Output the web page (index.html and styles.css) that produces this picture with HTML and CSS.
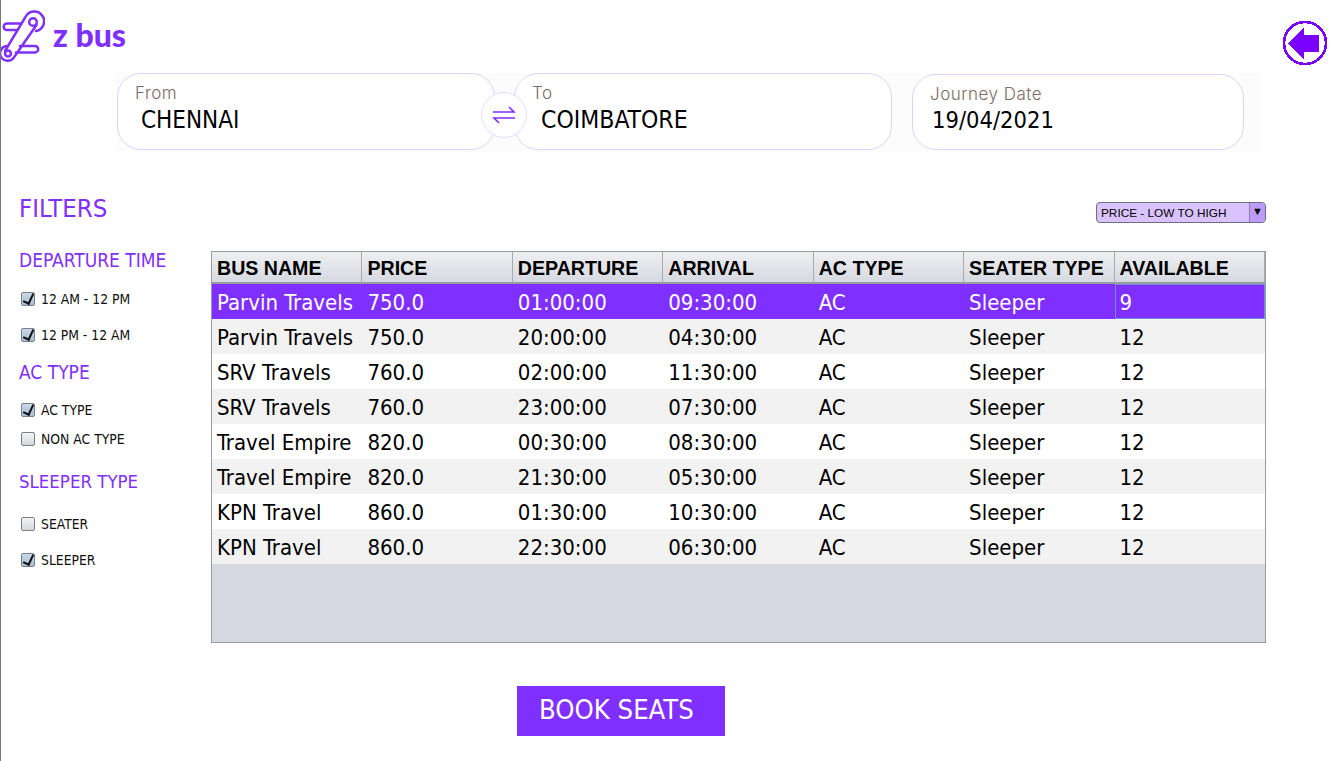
FILE: index.html
```html
<!DOCTYPE html>
<html lang="en">
<head>
  <meta charset="UTF-8" />
  <title>z bus</title>
  <link rel="stylesheet" href="styles.css">
</head>
<body>

<header class="topbar">
  <div class="logo">
    <svg class="logo-mark" width="44" height="64" viewBox="1 0 44 64" fill="none">
      <g stroke="#7f2fff" stroke-width="2.500" stroke-linecap="round">
        <path d="M21.500 23.500 H7 a3.300 3.300 0 0 0 0 6.600 H17.500"/>
        <path d="M20 46 H35 a3.200 3.200 0 0 1 0 6.400 H16"/>
        <path d="M5 51 L25.500 17 A9.800 9.800 0 1 1 36 31"/>
        <path d="M36.500 25 L13.500 58 A7.500 7.500 0 1 1 6 46"/>
        <circle cx="33" cy="22" r="3.800"/>
        <circle cx="8" cy="53.500" r="3"/>
      </g>
    </svg>
    <span class="logo-text">z bus</span>
  </div>
  <svg class="back" width="48" height="48" viewBox="0 0 48 48" shape-rendering="crispEdges">
    <circle cx="24" cy="24" r="21" fill="none" stroke="#7a00ff" stroke-width="2.600"/>
    <path d="M7 24 L23 8 V16 H38 V33 H23 V41 Z" fill="#7a00ff"/>
  </svg>
</header>

<section class="search">
  <div class="field field-from">
    <label>From</label>
    <div class="value">CHENNAI</div>
  </div>
  <div class="field field-to">
    <label>To</label>
    <div class="value value-to">COIMBATORE</div>
  </div>
  <div class="field field-date">
    <label>Journey Date</label>
    <div class="value value-date">19/04/2021</div>
  </div>
  <div class="swap">
    <svg width="24" height="18" viewBox="0 0 24 18" fill="none" stroke="#7f2fff" stroke-width="1.600">
      <path d="M1 6 H22 L17 1"/>
      <path d="M23 12 H2 L7 17"/>
    </svg>
  </div>
</section>

<div class="main">
  <aside class="filters">
    <h2>FILTERS</h2>

    <h3 class="h-departure">DEPARTURE TIME</h3>
    <div class="check check-a on"><span class="box"></span>12 AM - 12 PM</div>
    <div class="check check-b on"><span class="box"></span>12 PM - 12 AM</div>

    <h3 class="h-ac">AC TYPE</h3>
    <div class="check check-c on"><span class="box"></span>AC TYPE</div>
    <div class="check check-d"><span class="box"></span>NON AC TYPE</div>

    <h3 class="h-sleeper">SLEEPER TYPE</h3>
    <div class="check check-e"><span class="box"></span>SEATER</div>
    <div class="check check-b on"><span class="box"></span>SLEEPER</div>
  </aside>

  <div class="results">
    <div class="sortrow">
      <div class="sort">
        <span class="sort-text">PRICE - LOW TO HIGH</span>
        <span class="sort-arrow">▼</span>
      </div>
    </div>

    <div class="tablewrap">
      <table>
        <thead>
          <tr>
            <th>BUS NAME</th><th>PRICE</th><th>DEPARTURE</th><th>ARRIVAL</th><th>AC TYPE</th><th>SEATER TYPE</th><th>AVAILABLE</th>
          </tr>
        </thead>
        <tbody>
          <tr class="selected"><td>Parvin Travels</td><td>750.0</td><td>01:00:00</td><td>09:30:00</td><td>AC</td><td>Sleeper</td><td class="focus">9</td></tr>
          <tr><td>Parvin Travels</td><td>750.0</td><td>20:00:00</td><td>04:30:00</td><td>AC</td><td>Sleeper</td><td>12</td></tr>
          <tr><td>SRV Travels</td><td>760.0</td><td>02:00:00</td><td>11:30:00</td><td>AC</td><td>Sleeper</td><td>12</td></tr>
          <tr><td>SRV Travels</td><td>760.0</td><td>23:00:00</td><td>07:30:00</td><td>AC</td><td>Sleeper</td><td>12</td></tr>
          <tr><td>Travel Empire</td><td>820.0</td><td>00:30:00</td><td>08:30:00</td><td>AC</td><td>Sleeper</td><td>12</td></tr>
          <tr><td>Travel Empire</td><td>820.0</td><td>21:30:00</td><td>05:30:00</td><td>AC</td><td>Sleeper</td><td>12</td></tr>
          <tr><td>KPN Travel</td><td>860.0</td><td>01:30:00</td><td>10:30:00</td><td>AC</td><td>Sleeper</td><td>12</td></tr>
          <tr><td>KPN Travel</td><td>860.0</td><td>22:30:00</td><td>06:30:00</td><td>AC</td><td>Sleeper</td><td>12</td></tr>
        </tbody>
      </table>
    </div>

    <button class="book">BOOK SEATS</button>
  </div>
</div>

</body>
</html>
```

FILE: styles.css
```css
* {
  box-sizing: border-box;
}

html, body {
  height: 100%;
}

body {
  margin: 0;
  background: white;
  border-left: 1px solid #777;
  font-family: "DejaVu Sans Condensed", "DejaVu Sans", sans-serif;
  color: black;
  overflow: hidden;
}

.topbar {
  height: 73px;
  display: flex;
  justify-content: space-between;
  align-items: flex-start;
  padding-right: 12px;
}

.logo {
  display: flex;
  align-items: flex-start;
}

.logo-text {
  margin-left: 8px;
  margin-top: 17px;
  font-family: Lato, sans-serif;
  font-weight: 900;
  font-size: 32px;
  line-height: 36px;
  color: #7f2fff;
}

.back {
  margin-top: 19px;
}

.search {
  position: relative;
  display: flex;
  width: 1144px;
  height: 80px;
  margin-left: 116px;
  background: #fcfcfc;
}

.field {
  height: 77px;
  background: white;
  border: 1px solid #e0d2ff;
  border-radius: 24px;
  padding: 9px 17px;
}

.field label {
  display: block;
  font-family: Inter, sans-serif;
  font-weight: 300;
  font-size: 17px;
  letter-spacing: 0.5px;
  line-height: 20px;
  color: #7a6c66;
}

.value {
  font-size: 24px;
  line-height: 30px;
  margin-left: 6px;
  margin-top: 2px;
}

.value-to {
  margin-left: 9px;
  font-size: 24.500px;
}

.value-date {
  margin-left: 2px;
  margin-top: 1px;
  font-size: 23.500px;
}

.field-from {
  width: 378px;
}

.field-to {
  width: 378px;
  margin-left: 19px;
}

.field-date {
  width: 332px;
  margin-left: 20px;
  margin-top: 1px;
  height: 76px;
}

.swap {
  position: absolute;
  left: 364px;
  top: 19px;
  width: 46px;
  height: 46px;
  border-radius: 50%;
  background: white;
  border: 1px solid #e6dbff;
  display: flex;
  align-items: center;
  justify-content: center;
}

.main {
  display: flex;
}

.filters {
  width: 210px;
  padding-left: 18px;
}

.filters h2 {
  margin: 40px 0 0;
  font-weight: normal;
  font-size: 25.500px;
  line-height: 30px;
  color: #7f2fff;
}

.filters h3 {
  margin: 0;
  font-weight: normal;
  font-size: 19px;
  line-height: 22px;
  color: #7f2fff;
}

.h-departure {
  padding-top: 26px;
}

.h-ac {
  padding-top: 17px;
}

.h-sleeper {
  padding-top: 23px;
  font-size: 18.500px !important;
}

.check {
  display: flex;
  align-items: center;
  height: 18px;
  font-size: 13.800px;
  color: #111;
}

.check-a {
  margin-top: 19px;
}

.check-b {
  margin-top: 18px;
}

.check-c {
  margin-top: 18px;
}

.check-d {
  margin-top: 11px;
}

.check-e {
  margin-top: 22px;
}

.box {
  position: relative;
  width: 14px;
  height: 14px;
  margin-left: 2px;
  margin-right: 6px;
  border: 1px solid #7a7f88;
  border-radius: 2px;
  background: linear-gradient(#f4f4f6, #d5d7db);
}

.on .box {
  background: linear-gradient(#c9d8e8, #a9bfd6);
}

.on .box::after {
  content: "";
  position: absolute;
  left: 3px;
  top: -1px;
  width: 5px;
  height: 10px;
  border-right: 2px solid #111;
  border-bottom: 2px solid #111;
  transform: rotate(25deg);
}

.results {
  width: 1055px;
}

.sortrow {
  display: flex;
  justify-content: flex-end;
  padding-top: 49px;
  height: 98px;
}

.sort {
  width: 170px;
  height: 21px;
  display: flex;
  justify-content: space-between;
  border: 1px solid #6e6e80;
  border-radius: 4px;
  background: #d9c3ff;
  font-family: "Liberation Sans", sans-serif;
  font-size: 11.800px;
  line-height: 20px;
  overflow: hidden;
}

.sort-text {
  padding-left: 4px;
}

.sort-arrow {
  width: 16px;
  background: #bd9cf5;
  border-left: 1px solid #8d78b5;
  text-align: center;
  font-size: 11px;
  line-height: 17px;
}

.tablewrap {
  height: 392px;
  background: #d6d9e2;
  border: 1px solid #9a9ca3;
}

table {
  width: 100%;
  border-collapse: separate;
  border-spacing: 0;
  table-layout: fixed;
}

th {
  height: 32px;
  padding: 2px 0 0 5px;
  text-align: left;
  font-family: "Liberation Sans", sans-serif;
  font-weight: bold;
  font-size: 19.600px;
  background: linear-gradient(#eeeff1, #d6d9e0);
  border-right: 1px solid #a8aab0;
  border-bottom: 2px solid #9a9ca3;
}

td {
  height: 35px;
  padding: 3px 0 0 5px;
  font-size: 22px;
  line-height: 26px;
  white-space: nowrap;
  background: white;
}

tbody tr:nth-child(even) td {
  background: #f2f2f2;
}

tbody tr.selected td {
  padding-top: 2px;
  background: #7f2fff;
  color: white;
}

tbody tr.selected td.focus {
  border: 1px solid #6e8fd8;
  padding-left: 4px;
}

.book {
  display: block;
  width: 208px;
  height: 50px;
  margin: 43px 0 0 306px;
  padding: 0 0 4px 22px;
  border: none;
  background: #7f2fff;
  color: white;
  font-family: inherit;
  font-size: 27.200px;
  text-align: left;
}
```
